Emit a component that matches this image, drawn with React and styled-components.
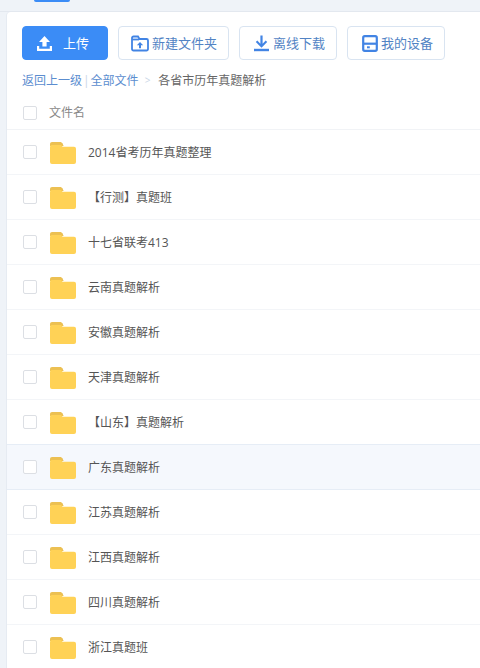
import React from "react";
import styled, { createGlobalStyle } from "styled-components";

const Global = createGlobalStyle`
  html, body { margin: 0; padding: 0; height: 100%; overflow: hidden; background: #eff3f8; }
  body { font-family: "Open Sans", "Noto Sans CJK SC", sans-serif; }
`;
const Page = styled.div`
  width: 480px; height: 668px; overflow: hidden; background: #eff3f8; display: flex; flex-direction: column;
`;
const TopBar = styled.div`
  height: 11px; flex: none; padding-left: 34px; border-bottom: 1px solid #e3e8ef;
`;
const TopTab = styled.div`
  width: 36px; height: 2px; background: #3b8cf6; border-radius: 0 0 2px 2px;
`;
const Card = styled.main`
  margin-left: 7px; flex: 1; min-height: 0; background: #fff; border-top-left-radius: 4px;
  box-shadow: -1px 0 0 #e6ebf2;
`;
const Toolbar = styled.div`
  display: flex; gap: 10px; padding: 14px 0 0 15px; height: 34px;
`;
const Button = styled.button`
  box-sizing: border-box; width: ${p => p.$w}px; height: 34px; padding: 0 0 0 ${p => p.$pl || 12}px;
  display: flex; align-items: center; gap: ${p => p.$gap ?? 3}px;
  border-radius: 4px; font: 400 13px "Noto Sans CJK SC", sans-serif; cursor: pointer;
  border: 1px solid ${p => p.$primary ? "#3b8cf6" : "#d9e4f1"};
  background: ${p => p.$primary ? "#3b8cf6" : "#fff"};
  color: ${p => p.$primary ? "#fff" : "#5283c4"};
`;
const ButtonLabel = styled.span`margin-top: -2px;`;
const Crumbs = styled.nav`
  display: flex; align-items: center; height: 20px; margin-top: 10px; padding-left: 15px;
  font-size: 12px; color: #5b8dcf; white-space: nowrap;
`;
const Sep = styled.span`
  color: #c9d6e6; margin: 0 ${p => p.$m}px; font-size: ${p => p.$s || 12}px;
`;
const Current = styled.span`color: #666; margin-left: 2px;`;
const HeadRow = styled.div`
  display: flex; align-items: center; box-sizing: border-box; height: 38px; margin-top: 2px;
  padding: 4px 0 0 16px; font-size: 12px; color: #888; border-bottom: 1px solid #f1f3f6;
`;
const Row = styled.div`
  display: flex; align-items: center; box-sizing: border-box; height: 45px; padding-left: 16px;
  border-bottom: 1px solid ${p => p.$hover ? "#e6edf6" : "#f3f5f8"};
  background: ${p => p.$hover ? "#f5f8fd" : "#fff"};
  ${p => p.$hover && "box-shadow: 0 -1px 0 #e6edf6;"}
`;
const Check = styled.span`
  flex: none; box-sizing: border-box; width: 14px; height: 14px; border: 1px solid #dcdfe4;
  border-radius: 2px; background: #fff;
`;
const HeadLabel = styled.span`margin-left: 12px; margin-top: -1px;`;
const Name = styled.span`
  margin-left: 12px; font-size: 12px; color: #555; white-space: nowrap;
`;
const FolderBox = styled.svg`flex: none; margin: 1px 0 0 13px;`;

const Folder = () => (
  <FolderBox width="26" height="22" viewBox="0 0 26 22">
    <path d="M2 0h8c1.200 0 2 .5 2.600 1.600L13.600 4H0V2C0 .9.9 0 2 0Z" fill="#ecc052" />
    <path d="M0 5a2 2 0 0 1 2-2h9l1.600 1.800H24a2 2 0 0 1 2 2V20a2 2 0 0 1-2 2H2a2 2 0 0 1-2-2Z" fill="#ffd256" />
  </FolderBox>
);
const UploadIcon = () => (
  <svg width="17" height="17" viewBox="0 0 17 17" fill="#fff">
    <path d="M8.500 1 14 7h-3.400v4.600H6.400V7H3Z" />
    <path d="M1 11h2.200v2.800h10.600V11H16v5H1Z" />
  </svg>
);
const NewFolderIcon = () => (
  <svg width="18" height="17" viewBox="0 0 18 17" fill="none">
    <path d="M1 3a1.500 1.500 0 0 1 1.500-1.500H7L8.500 4H15.500A1.500 1.500 0 0 1 17 5.500V14a1.500 1.500 0 0 1-1.500 1.500h-13A1.500 1.500 0 0 1 1 14Z" stroke="#4284e4" strokeWidth="1.800" />
    <path d="M1 4.500h7" stroke="#4284e4" strokeWidth="1.800" />
    <path d="M9 7l3.200 3.200h-2.200v3h-2v-3H5.800Z" fill="#4284e4" />
  </svg>
);
const DownloadIcon = () => (
  <svg width="17" height="17" viewBox="0 0 17 17" fill="#4284e4">
    <path d="M7.400.5h2.200v8.200l3.100-3.100 1.500 1.500-5.700 5.700-5.700-5.700 1.500-1.500 3.100 3.100Z" />
    <path d="M1 13.800h15v2.400H1Z" />
  </svg>
);
const DeviceIcon = () => (
  <svg width="16" height="17" viewBox="0 0 16 17" fill="none">
    <rect x="1.200" y="1.200" width="13.600" height="14.600" rx="1.500" stroke="#4284e4" strokeWidth="2.200" />
    <path d="M1.500 8.700h13" stroke="#4284e4" strokeWidth="2.200" />
    <rect x="5" y="11.300" width="2.800" height="2" fill="#4284e4" />
  </svg>
);

const files = [
  "2014省考历年真题整理", "【行测】真题班", "十七省联考413", "云南真题解析", "安徽真题解析", "天津真题解析",
  "【山东】真题解析", "广东真题解析", "江苏真题解析", "江西真题解析", "四川真题解析", "浙江真题班",
];

export default function App() {
  return (
    <Page>
      <Global />
      <TopBar><TopTab /></TopBar>
      <Card>
        <Toolbar>
          <Button $primary $w={86} $pl={13} $gap={10}><UploadIcon /><ButtonLabel>上传</ButtonLabel></Button>
          <Button $w={111} $pl={12}><NewFolderIcon /><ButtonLabel>新建文件夹</ButtonLabel></Button>
          <Button $w={98} $pl={13}><DownloadIcon /><ButtonLabel>离线下载</ButtonLabel></Button>
          <Button $w={98} $pl={14}><DeviceIcon /><ButtonLabel>我的设备</ButtonLabel></Button>
        </Toolbar>
        <Crumbs>
          <span>返回上一级</span><Sep $m={1}>|</Sep><span>全部文件</span>
          <Sep $m={6} $s={10}>&gt;</Sep><Current>各省市历年真题解析</Current>
        </Crumbs>
        <HeadRow><Check /><HeadLabel>文件名</HeadLabel></HeadRow>
        {files.map((f, i) => (
          <Row key={f} $hover={i === 7}>
            <Check />
            <Folder />
            <Name>{f}</Name>
          </Row>
        ))}
      </Card>
    </Page>
  );
}
